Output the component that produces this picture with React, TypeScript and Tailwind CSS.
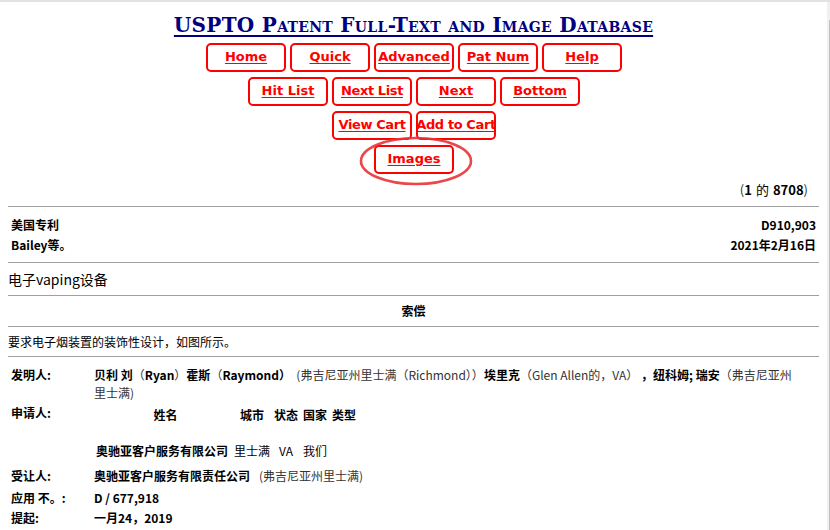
import React from "react";

const NAV_ROWS: string[][] = [
  ["Home", "Quick", "Advanced", "Pat Num", "Help"],
  ["Hit List", "Next List", "Next", "Bottom"],
  ["View Cart", "Add to Cart"],
  ["Images"],
];

const CJK = { fontFamily: '"Noto Sans CJK SC", "Noto Sans", sans-serif' };

function NavButton({ label }: { label: string }) {
  const tight = label.length > 8;
  return (
    <a
      href="#"
      className={`w-[80px] h-[29px] border-2 border-[#ff0000] rounded-[5px] flex items-center justify-center text-[13px] font-bold text-[#ff0000] underline underline-offset-2 whitespace-nowrap pb-[2px] ${
        tight ? "tracking-[-0.4px]" : ""
      }`}
      style={{ fontFamily: '"DejaVu Sans", Verdana, sans-serif' }}
    >
      {label}
    </a>
  );
}

function Rule() {
  return <div className="border-t border-[#a0a0a0]" />;
}

export default function App() {
  return (
    <div className="w-[830px] h-[530px] overflow-hidden bg-white flex relative" style={CJK}>
      <div className="absolute top-0 left-0 right-0 h-[2px] bg-[#e2e2e2]" />
      <div className="w-[827px] px-[8px] text-[12px] text-black">
        {/* title */}
        <div className="pt-[12px] text-center leading-[26px]">
          <span
            className="text-[20px] font-bold text-[#000080] underline underline-offset-[3px] decoration-[2px] tracking-[0.3px]"
            style={{ fontFamily: '"DejaVu Serif", serif', fontVariant: "small-caps" }}
          >
            USPTO Patent Full-Text and Image Database
          </span>
        </div>

        {/* nav buttons */}
        <div className="relative mt-[3px] flex flex-col items-center gap-[5px] pl-[1px]">
          {NAV_ROWS.map((row, i) => (
            <div key={i} className="flex gap-[4px]">
              {row.map((b) => (
                <NavButton key={b} label={b} />
              ))}
            </div>
          ))}
          <svg
            className="absolute left-[350px] top-[92px] pointer-events-none"
            width="116"
            height="52"
            viewBox="0 0 116 52"
          >
            <ellipse cx="58" cy="26" rx="55" ry="23" fill="none" stroke="#e8333a" strokeWidth="2.6" opacity="0.9" />
          </svg>
        </div>

        <div className="h-[32px] flex items-center justify-end pr-[11px] text-[13px]">
          <span className="text-[#333]">(</span>
          <b>1</b>
          <span className="mx-[4px]">的</span>
          <b>8708</b>
          <span className="text-[#333]">)</span>
        </div>

        <Rule />
        <div className="px-[3px] pt-[8px] pb-[7px] font-bold">
          <div className="flex justify-between h-[20px] items-center">
            <span>美国专利</span>
            <span>D910,903</span>
          </div>
          <div className="flex justify-between h-[20px] items-center">
            <span>Bailey等。</span>
            <span>2021年2月16日</span>
          </div>
        </div>
        <Rule />
        <div className="h-[32px] flex items-center text-[14px]">电子vaping设备</div>
        <Rule />
        <div className="h-[30px] flex items-center justify-center font-bold">索偿</div>
        <Rule />
        <div className="h-[29px] flex items-center">要求电子烟装置的装饰性设计，如图所示。</div>
        <Rule />

        <div className="px-[3px] pt-[8px]">
          <div className="flex">
            <div className="w-[83px] shrink-0 font-bold h-[20px] flex items-center">发明人:</div>
            <div className="leading-[18px] pt-[1px]">
              <span className="whitespace-nowrap">
                <b>贝利 刘</b>
                <span className="text-[#333]">（</span>
                <b>Ryan</b>
                <span className="text-[#333]">）</span>
                <b>霍斯</b>
                <span className="text-[#333]">（</span>
                <b>Raymond）</b>
                <span className="text-[#333]"> &nbsp;(弗吉尼亚州里士满（Richmond））</span>
                <b>埃里克</b>
                <span className="text-[#333]">（Glen Allen的，VA）</span>
                <b> ，纽科姆; 瑞安</b>
                <span className="text-[#333]">（弗吉尼亚州</span>
              </span>
              <br />
              <span className="text-[#333]">里士满)</span>
            </div>
          </div>

          <div className="flex mt-[1px]">
            <div className="w-[83px] shrink-0 font-bold h-[20px] flex items-center">申请人:</div>
            <div className="pt-[3px]">
              <div className="grid grid-cols-[139px_38px_30px_28px_30px] font-bold">
                <div className="h-[18px] flex items-center justify-center pl-[4px]">姓名</div>
                <div className="h-[18px] flex items-center justify-center">城市</div>
                <div className="h-[18px] flex items-center justify-center">状态</div>
                <div className="h-[18px] flex items-center justify-center">国家</div>
                <div className="h-[18px] flex items-center justify-center">类型</div>
                <div className="h-[18px] col-span-5" />
                <div className="h-[18px] flex items-center pl-[2px] whitespace-nowrap">奥驰亚客户服务有限公司</div>
                <div className="h-[18px] flex items-center justify-center font-normal">里士满</div>
                <div className="h-[18px] flex items-center justify-center font-normal">VA</div>
                <div className="h-[18px] flex items-center justify-center font-normal">我们</div>
                <div className="h-[18px]" />
              </div>
            </div>
          </div>

          <div className="flex mt-[5px] h-[22px] items-center">
            <div className="w-[83px] shrink-0 font-bold">受让人:</div>
            <b>奥驰亚客户服务有限责任公司</b>
            <span className="ml-[9px] text-[#333]">(弗吉尼亚州里士满)</span>
          </div>
          <div className="flex h-[21px] items-center">
            <div className="w-[83px] shrink-0 font-bold">应用 不。:</div>
            <b>D / 677,918</b>
          </div>
          <div className="flex h-[20px] items-center">
            <div className="w-[83px] shrink-0 font-bold">提起:</div>
            <b>一月24，2019</b>
          </div>
        </div>
      </div>
      <div className="w-[3px] bg-[#f0f0f0] flex justify-end">
        <div className="w-[1px] mt-[20px] h-full bg-[#c2c2c2]" />
      </div>
    </div>
  );
}
